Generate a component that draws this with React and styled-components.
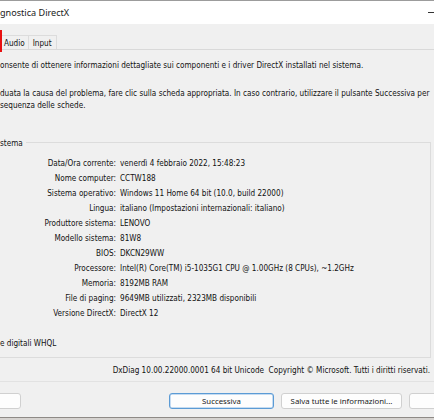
import React from 'react'
import styled, { createGlobalStyle } from 'styled-components'

const Global = createGlobalStyle`
  html, body { margin: 0; padding: 0; background: #f0f0f0; }
  body { width: 434px; height: 420px; overflow: hidden; }
`

const Window = styled.div`
  width: 434px;
  height: 420px;
  box-sizing: border-box;
  border-top: 1px solid #9c9c9c;
  background: #f0f0f0;
  display: flex;
  flex-direction: column;
  overflow: hidden;
  font-family: "DejaVu Sans Condensed", "DejaVu Sans", sans-serif;
  font-stretch: condensed;
  font-size: 8.1px;
  color: #111;
`

const TitleBar = styled.div`
  height: 23px;
  flex: none;
  background: #fff;
  display: flex;
  align-items: center;
  justify-content: space-between;
  font-family: "Noto Sans", sans-serif;
  font-stretch: normal;
  font-size: 9.1px;
  color: #1a1a1a;
`

const Minimize = styled.span`
  width: 6px;
  height: 1px;
  background: #333;
`

const TabStrip = styled.div`
  position: relative;
  height: 25px;
  flex: none;
  display: flex;
  align-items: flex-end;
  padding-left: 1px;
`

const Highlight = styled.span`
  position: absolute;
  left: 0;
  top: 6px;
  width: 2px;
  height: 22px;
  background: #e81010;
`

const Tab = styled.div`
  height: 14px;
  box-sizing: border-box;
  padding: 0 ${p => p.$pad}px;
  border: 1px solid #dcdcdc;
  border-bottom: none;
  margin-left: -1px;
  display: flex;
  align-items: center;
  line-height: 12px;
`

const Panel = styled.div`
  flex: 1;
  border-top: 1px solid #d9d9d9;
  display: flex;
  flex-direction: column;
`

const Para = styled.div`
  line-height: 12px;
  white-space: nowrap;
  margin-top: ${p => p.$top || 0}px;
`

const Group = styled.div`
  margin: 26px 3px 0 0;
  display: flex;
  flex-direction: column;
`

const GroupHead = styled.div`
  display: flex;
  height: 12px;
  line-height: 12px;
`

const Legend = styled.span`
  padding-right: 3px;
`

const HeadLine = styled.span`
  flex: 1;
  align-self: flex-end;
  height: 6px;
  border-top: 1px solid #dcdcdc;
  border-right: 1px solid #dcdcdc;
`

const GroupBody = styled.div`
  border-right: 1px solid #dcdcdc;
  border-bottom: 1px solid #dcdcdc;
  padding: 6px 0 8px;
`

const InfoGrid = styled.div`
  display: grid;
  grid-template-columns: 116px 1fr;
  column-gap: 4px;
  grid-auto-rows: 15px;
  align-items: center;
  white-space: nowrap;
`

const Label = styled.span`
  text-align: right;
`

const Value = styled.span``

const Footer = styled.div`
  margin-top: 6px;
  padding-right: 4px;
  line-height: 12px;
  text-align: right;
  white-space: nowrap;
`

const Separator = styled.div`
  margin-top: 5px;
  height: 1px;
  background: #e2e2e2;
`

const ButtonRow = styled.div`
  margin: 11px -60px 0 -60px;
  display: flex;
  gap: 7px;
`

const Spacer = styled.div`
  flex: 1;
`

const Button = styled.button`
  width: ${p => p.$w}px;
  height: 16px;
  box-sizing: border-box;
  padding: 0;
  border: 1px solid ${p => (p.$default ? '#5b9bd5' : '#d0d0d0')};
  box-shadow: ${p => (p.$default ? 'inset 0 0 0 0.5px #8fbbe6' : 'none')};
  border-radius: 3px;
  background: #fdfdfd;
  font-family: "Noto Sans", sans-serif;
  font-size: 7.8px;
  color: #1b1b1b;
  line-height: 14px;
`

const BottomEdge = styled.div`
  margin-top: 8px;
  flex: 1;
  border-top: 1px solid #8e8a86;
  background: #d6d3d0;
`

const info = [
  ['Data/Ora corrente:', 'venerdì 4 febbraio 2022, 15:48:23'],
  ['Nome computer:', 'CCTW188'],
  ['Sistema operativo:', 'Windows 11 Home 64 bit (10.0, build 22000)'],
  ['Lingua:', 'italiano (Impostazioni internazionali: italiano)'],
  ['Produttore sistema:', 'LENOVO'],
  ['Modello sistema:', '81W8'],
  ['BIOS:', 'DKCN29WW'],
  ['Processore:', 'Intel(R) Core(TM) i5-1035G1 CPU @ 1.00GHz (8 CPUs), ~1.2GHz'],
  ['Memoria:', '8192MB RAM'],
  ['File di paging:', '9649MB utilizzati, 2323MB disponibili'],
  ['Versione DirectX:', 'DirectX 12'],
]

export default function App() {
  return (
    <>
      <Global />
      <Window>
        <TitleBar>
          <span>gnostica DirectX</span>
          <Minimize />
        </TitleBar>
        <TabStrip>
          <Highlight />
          <Tab $pad={3}>Audio</Tab>
          <Tab $pad={4}>Input</Tab>
        </TabStrip>
        <Panel>
          <Para $top={9}>onsente di ottenere informazioni dettagliate sui componenti e i driver DirectX installati nel sistema.</Para>
          <Para $top={16}>duata la causa del problema, fare clic sulla scheda appropriata. In caso contrario, utilizzare il pulsante Successiva per</Para>
          <Para>sequenza delle schede.</Para>
          <Group>
            <GroupHead>
              <Legend>stema</Legend>
              <HeadLine />
            </GroupHead>
            <GroupBody>
              <InfoGrid>
                {info.map(([k, v]) => (
                  <React.Fragment key={k}>
                    <Label>{k}</Label>
                    <Value>{v}</Value>
                  </React.Fragment>
                ))}
              </InfoGrid>
              <Para $top={17}>e digitali WHQL</Para>
            </GroupBody>
          </Group>
          <Footer>DxDiag 10.00.22000.0001 64 bit Unicode&nbsp; Copyright © Microsoft. Tutti i diritti riservati.</Footer>
          <Separator />
          <ButtonRow>
            <Button $w={81} aria-label="Guida" />
            <Spacer />
            <Button $w={105} $default>Successiva</Button>
            <Button $w={121}>Salva tutte le informazioni...</Button>
            <Button $w={85} aria-label="Esci" />
          </ButtonRow>
          <BottomEdge />
        </Panel>
      </Window>
    </>
  )
}
